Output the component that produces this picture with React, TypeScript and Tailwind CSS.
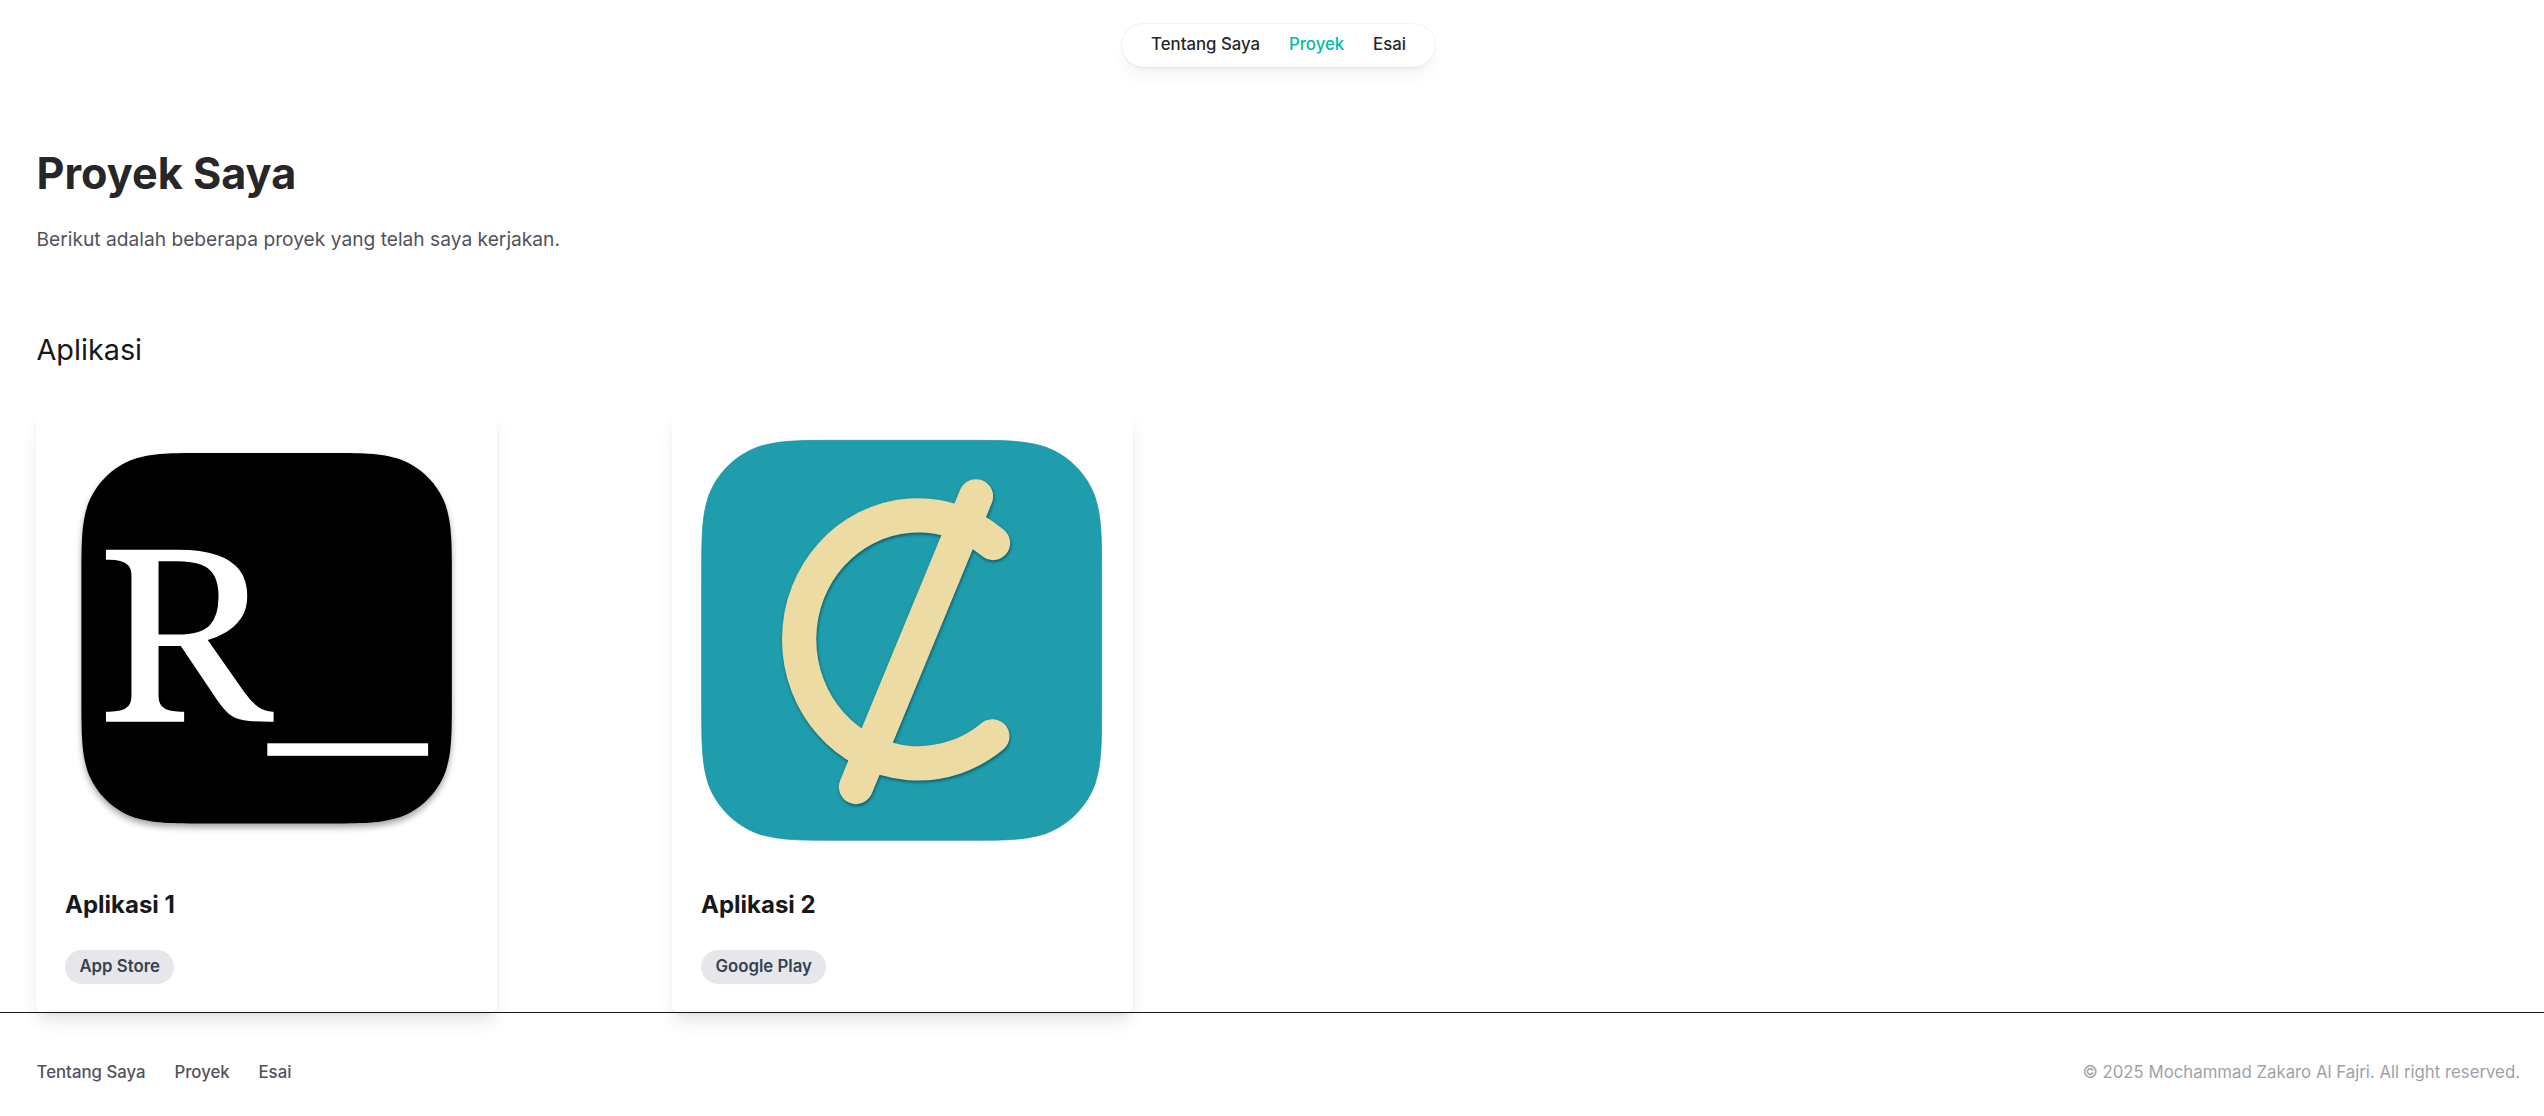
import type { ReactNode } from 'react'

const links = ['Tentang Saya', 'Proyek', 'Esai']

const squircle =
  'M0 408 C0 291 0 232 20 169 C45 100 100 45 169 20 C232 0 291 0 408 0 H792 C909 0 968 0 1031 20 C1100 45 1155 100 1180 169 C1200 232 1200 291 1200 408 V792 C1200 909 1200 968 1180 1031 C1155 1100 1100 1155 1031 1180 C968 1200 909 1200 792 1200 H408 C291 1200 232 1200 169 1180 C100 1155 45 1100 20 1031 C0 968 0 909 0 792 Z'

function TerminalIcon() {
  return (
    <svg viewBox="0 0 403 403" className="h-[403px] w-[403px] overflow-visible" role="img" aria-label="Aplikasi 1">
      <g className="drop-shadow-[0_4px_3px_rgba(0,0,0,0.35)]">
        <path d={squircle} transform="translate(16.4 13) scale(0.3087)" fill="#000" />
      </g>
      <text
        x="0"
        y="0"
        transform="translate(30.7 281.8) scale(1.115 1)"
        fontSize="241"
        fill="#fff"
        className="font-['Noto_Serif','Liberation_Serif',serif]"
      >
        R
      </text>
      <rect x="202.3" y="303.3" width="160.8" height="12.5" fill="#fff" />
    </svg>
  )
}

function CediIcon() {
  return (
    <svg viewBox="-2 -1 1209 1209" className="h-[403px] w-[403px] overflow-visible" role="img" aria-label="Aplikasi 2">
      <path d={squircle} fill="#1f9dad" stroke="#1a8d9b" strokeWidth="2" />
      <g
        fill="none"
        stroke="#ecdba2"
        strokeWidth="103"
        strokeLinecap="round"
        className="drop-shadow-[2px_5px_5px_rgba(0,40,50,0.6)]"
      >
        <path d="M874 308 A357 372 0 1 0 872 888" />
        <path d="M823 168 L463 1040" />
      </g>
    </svg>
  )
}

function Card({ icon, title, store }: { icon: ReactNode; title: string; store: string }) {
  return (
    <article className="h-[601px] w-[461px] rounded-[5px] bg-white px-[29px] pt-[29px] shadow-[0_12px_18px_-3.6px_rgba(0,0,0,0.1),0_4.8px_7.2px_-4.8px_rgba(0,0,0,0.1)]">
      {icon}
      <h3 className="mt-[44px] text-[24px] leading-[36px] font-bold text-[#18181b]">{title}</h3>
      <span className="mt-[27px] flex h-[34px] w-fit items-center rounded-full bg-gray-200 px-[14.4px] pb-[1px] text-[16.8px] font-semibold text-gray-700">
        {store}
      </span>
    </article>
  )
}

export default function App() {
  return (
    <div className="flex h-[1116px] flex-col bg-white font-[Inter,sans-serif] text-[#18181b]">
      <header className="flex justify-center pt-[24px] pl-[13px]">
        <nav className="flex h-[43px] items-center gap-[28.8px] rounded-full bg-white px-[28.8px] pb-[2px] text-[16.8px] font-medium text-zinc-800 shadow-[0_12px_18px_-3.6px_rgba(39,39,42,0.05),0_4.8px_7.2px_-4.8px_rgba(39,39,42,0.05)] ring-1 ring-zinc-900/5">
          {links.map((l) => (
            <a key={l} className={l === 'Proyek' ? 'text-teal-500' : ''}>
              {l}
            </a>
          ))}
        </nav>
      </header>
      <main className="px-[36px] pt-[82px]">
        <h1 className="pl-[0.5px] text-[43.2px] leading-[48px] font-bold text-zinc-800">Proyek Saya</h1>
        <p className="mt-[28px] pl-[0.5px] text-[19.2px] leading-[29px] text-zinc-600">
          Berikut adalah beberapa proyek yang telah saya kerjakan.
        </p>
        <h2 className="mt-[77px] pl-[0.5px] text-[28.8px] leading-[38px]">Aplikasi</h2>
        <div className="mt-[42px] grid grid-cols-[repeat(4,636px)]">
          <Card icon={<TerminalIcon />} title="Aplikasi 1" store="App Store" />
          <Card icon={<CediIcon />} title="Aplikasi 2" store="Google Play" />
        </div>
      </main>
      <footer className="relative flex h-[104px] items-center justify-between border-t border-[#18181b] pt-[17px] pr-[24px] pl-[36.5px] text-[16.8px]">
        <nav className="flex gap-[28.8px] font-medium text-zinc-600">
          {links.map((l) => (
            <a key={l}>{l}</a>
          ))}
        </nav>
        <p className="text-zinc-400">© 2025 Mochammad Zakaro Al Fajri. All right reserved.</p>
      </footer>
    </div>
  )
}
